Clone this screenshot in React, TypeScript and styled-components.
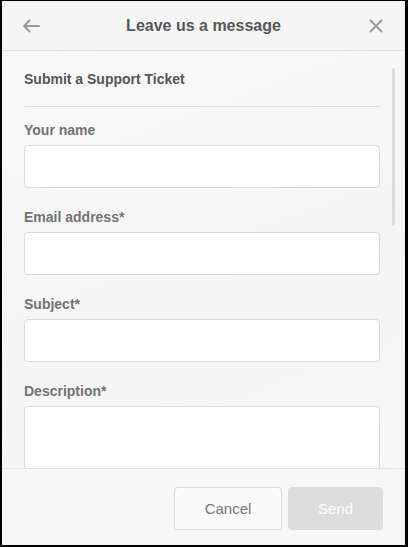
import React from 'react';
import styled, { createGlobalStyle } from 'styled-components';

const GlobalStyle = createGlobalStyle`
  html, body {
    margin: 0;
    padding: 0;
    background: #000;
  }
  * {
    box-sizing: border-box;
  }
`;

const fields = [
  { label: 'Your name', multiline: false },
  { label: 'Email address*', multiline: false },
  { label: 'Subject*', multiline: false },
  { label: 'Description*', multiline: true },
];

const BackIcon = () => (
  <svg width="18" height="14" viewBox="0 0 18 14" fill="none">
    <path d="M17 7H2M7.5 1.5L2 7l5.5 5.5" stroke="#9a9a9a" strokeWidth="2" strokeLinecap="round" strokeLinejoin="round" />
  </svg>
);

const CloseIcon = () => (
  <svg width="14" height="14" viewBox="0 0 14 14" fill="none">
    <path d="M1.5 1.5l11 11M12.5 1.5l-11 11" stroke="#9a9a9a" strokeWidth="2" strokeLinecap="round" />
  </svg>
);

const App: React.FC = () => {
  return (
    <>
      <GlobalStyle />
      <Frame>
        <Panel>
          <Header>
            <IconButton aria-label="Back">
              <BackIcon />
            </IconButton>
            <Title>Leave us a message</Title>
            <IconButton aria-label="Close">
              <CloseIcon />
            </IconButton>
          </Header>
          <Body>
            <Form>
              <FormTitle>Submit a Support Ticket</FormTitle>
              <Divider />
              {fields.map((f) => (
                <Field key={f.label}>
                  <Label>{f.label}</Label>
                  {f.multiline ? <TextArea /> : <TextInput type="text" />}
                </Field>
              ))}
            </Form>
            <ScrollThumb />
          </Body>
          <Footer>
            <CancelButton>Cancel</CancelButton>
            <SendButton disabled>Send</SendButton>
          </Footer>
        </Panel>
      </Frame>
    </>
  );
};

const Frame = styled.div`
  width: 408px;
  height: 547px;
  padding: 1px 3px 2px 2px;
  background: #000;
`;

const Panel = styled.div`
  width: 100%;
  height: 100%;
  display: flex;
  flex-direction: column;
  background: #f7f7f7;
  font-family: 'Liberation Sans', Arial, Helvetica, sans-serif;
  overflow: hidden;
`;

const Header = styled.header`
  height: 50px;
  flex-shrink: 0;
  display: flex;
  align-items: center;
  justify-content: space-between;
  padding: 0 17px 0 17px;
  background: #f5f5f5;
  border-bottom: 1px solid #e2e2e2;
`;

const IconButton = styled.button`
  width: 24px;
  height: 24px;
  padding: 0;
  border: 0;
  background: none;
  display: flex;
  align-items: center;
  justify-content: center;
`;

const Title = styled.h1`
  margin: 0;
  font-size: 16px;
  font-weight: 700;
  color: #585858;
`;

const Body = styled.div`
  position: relative;
  flex: 1;
  overflow: hidden;
  background: linear-gradient(160deg, #f9f9f9 0%, #f5f5f5 60%, #f7f7f7 100%);
`;

const Form = styled.div`
  padding: 19px 25px 0 22px;
`;

const FormTitle = styled.h2`
  margin: 0;
  font-size: 14px;
  line-height: 18px;
  font-weight: 700;
  color: #555;
`;

const Divider = styled.hr`
  margin: 18px 0 14px;
  border: 0;
  border-top: 1px solid #dedede;
`;

const Field = styled.div`
  display: flex;
  flex-direction: column;
  margin-bottom: 20px;
`;

const Label = styled.label`
  font-size: 14px;
  line-height: 18px;
  font-weight: 700;
  color: #737373;
  margin-bottom: 6px;
`;

const TextInput = styled.input`
  height: 43px;
  width: 100%;
  background: #fff;
  border: 1px solid #d9d9d9;
  border-radius: 4px;
  outline: none;
`;

const TextArea = styled.textarea`
  height: 90px;
  width: 100%;
  background: #fff;
  border: 1px solid #d9d9d9;
  border-radius: 4px;
  resize: none;
  outline: none;
`;

const ScrollThumb = styled.div`
  position: absolute;
  top: 17px;
  right: 10px;
  width: 3px;
  height: 158px;
  border-radius: 2px;
  background: #dcdcdc;
`;

const Footer = styled.footer`
  height: 77px;
  flex-shrink: 0;
  display: flex;
  justify-content: flex-end;
  align-items: flex-start;
  gap: 6px;
  padding: 18px 22px 0 0;
  background: #f7f7f7;
  border-top: 1px solid #e2e2e2;
`;

const BaseButton = styled.button`
  height: 43px;
  border-radius: 4px;
  font-family: 'Liberation Sans', Arial, Helvetica, sans-serif;
  font-size: 15px;
`;

const CancelButton = styled(BaseButton)`
  width: 108px;
  background: #fafafa;
  border: 1px solid #dadada;
  color: #777;
`;

const SendButton = styled(BaseButton)`
  width: 95px;
  background: #dcdcdc;
  border: 1px solid #dcdcdc;
  color: #fff;
`;

export default App;
